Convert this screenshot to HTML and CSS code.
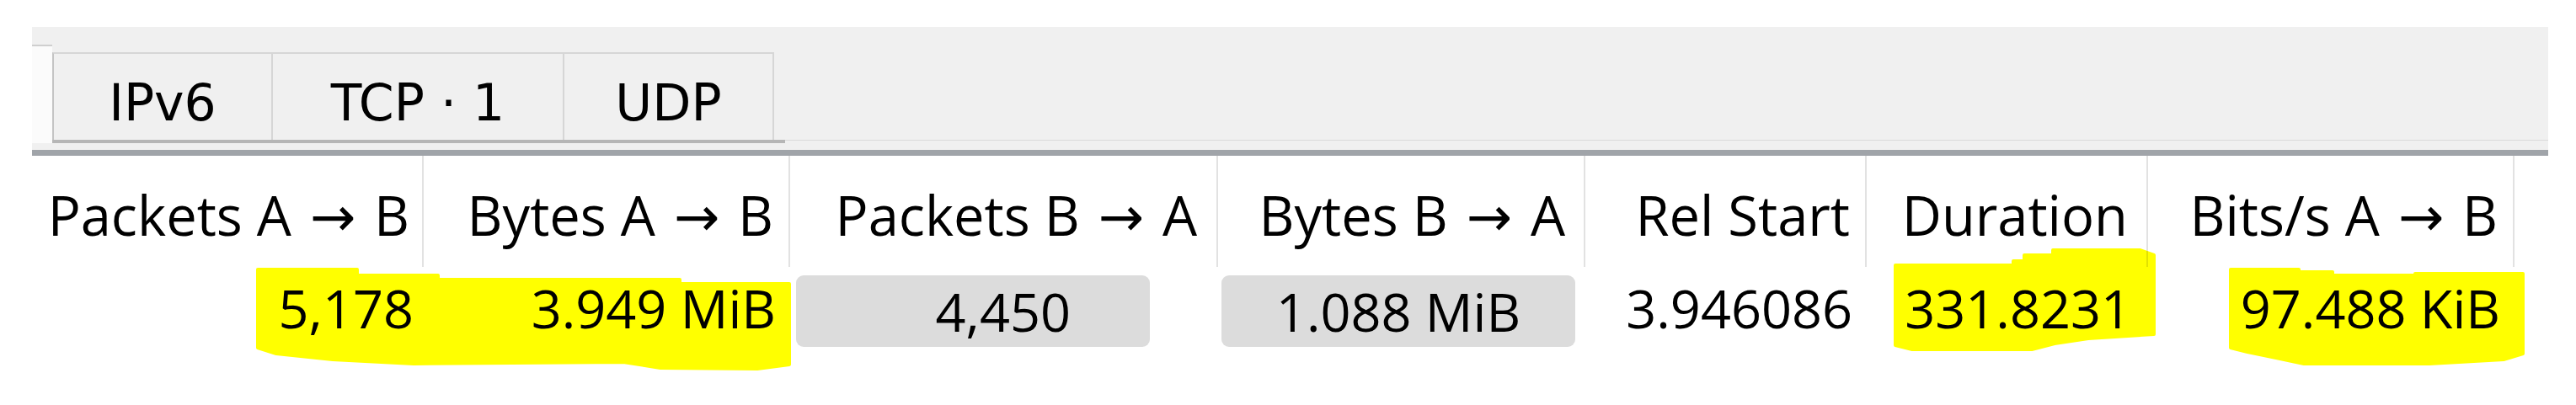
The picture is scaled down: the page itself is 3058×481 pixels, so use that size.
FILE: index.html
```html
<!DOCTYPE html>
<html>
<head>
<meta charset="utf-8">
<link rel="stylesheet" href="styles.css">
</head>
<body>
<div class="page">
  <div class="tabstrip">
    <div class="notch"></div>
    <div class="tabs">
      <div class="tab t1">IPv6</div>
      <div class="tab t2">TCP · 1</div>
      <div class="tab t3">UDP</div>
    </div>
    <div class="fill"></div>
  </div>
  <div class="table">
    <div class="hdr">
      <div class="c c1">Packets A <span class="arr">→</span> B</div>
      <div class="c c2">Bytes A <span class="arr">→</span> B</div>
      <div class="c c3">Packets B <span class="arr">→</span> A</div>
      <div class="c c4">Bytes B <span class="arr">→</span> A</div>
      <div class="c c5">Rel Start</div>
      <div class="c c6">Duration</div>
      <div class="c c7">Bits/s A <span class="arr">→</span> B</div>
    </div>
    <div class="vals">
      <div class="v v1">5,178</div>
      <div class="v v2">3.949 MiB</div>
      <div class="v v3"><div class="pill p3">4,450</div></div>
      <div class="v v4"><div class="pill p4">1.088 MiB</div></div>
      <div class="v v5">3.946086</div>
      <div class="v v6">331.8231</div>
      <div class="v v7">97.488 KiB</div>
    </div>
  </div>
  <svg class="marker" width="3058" height="481" viewBox="0 0 3058 481">
    <polygon points="306,320 424,320 424,327 520,327 520,332 807,332 807,337 937,337 937,433 899,438 784,437 740,430 491,432 395,427 328,420 306,413"/>
    <polygon points="2250,315 2390,315 2390,310 2403,310 2403,303 2437,303 2437,297 2540,297 2557,303 2557,397 2479,402 2439,408 2412,415 2270,415 2250,410"/>
    <polygon points="2648,320 2729,320 2729,323 2769,323 2769,327 2867,327 2867,325 2995,325 2995,420 2972,427 2884,432 2735,432 2702,425 2668,418 2648,413"/>
  </svg>
</div>
</body>
</html>
```
FILE: styles.css
```css
html, body {
  margin: 0;
  padding: 0;
  background: #ffffff;
}
.page {
  position: relative;
  width: 3058px;
  height: 481px;
  overflow: hidden;
  font-family: "Open Sans", "DejaVu Sans", sans-serif;
  color: #000;
}
.tabstrip {
  box-sizing: border-box;
  margin-left: 38px;
  margin-top: 32px;
  width: 2987px;
  height: 146px;
  background: #f0f0f0;
  display: flex;
  align-items: flex-end;
  padding-bottom: 8px;
}
.notch {
  box-sizing: border-box;
  width: 24px;
  height: 117px;
  background: #fbfbfb;
  border-top: 2px solid #cfcfcf;
}
.tabs {
  display: flex;
  border-bottom: 4px solid #b6b6b6;
  padding-right: 13px;
}
.tab {
  box-sizing: border-box;
  height: 104px;
  border-top: 2px solid #d6d6d6;
  border-left: 2px solid #d6d6d6;
  background: #f0f0f0;
  text-align: center;
  font-family: "DejaVu Sans", sans-serif;
  font-size: 60px;
  line-height: 70px;
  padding-top: 23px;
  color: #000;
}
.t1 { width: 260px; border-left-color: #c4c4c4; }
.t2 { width: 346px; }
.t3 { width: 251px; border-right: 2px solid #d6d6d6; }
.fill {
  flex: 1;
  height: 0;
  border-bottom: 1px solid #dadada;
  margin-bottom: 3px;
}
.table {
  margin-left: 38px;
  width: 2987px;
  border-top: 7px solid #a0a4a9;
}
.hdr, .vals {
  display: grid;
  grid-template-columns: 465px 435px 508px 436px 334px 334px 435px;
}
.hdr {
  height: 132px;
}
.c {
  box-sizing: border-box;
  text-align: right;
  font-size: 65px;
  font-weight: 500;
  line-height: 86px;
  padding-top: 27px;
  border-right: 2px solid #e2e2e2;
  white-space: nowrap;
}
.arr {
  display: inline-block;
  margin: 0 5px;
}
.c1 { padding-right: 15px; }
.c2 { padding-right: 18px; }
.c3 { padding-right: 23px; }
.c4 { padding-right: 22px; }
.c5 { padding-right: 18px; }
.c6 { padding-right: 22px; }
.c7 { padding-right: 18px; }
.vals {
  height: 130px;
}
.v {
  box-sizing: border-box;
  text-align: right;
  font-size: 63px;
  font-weight: 500;
  line-height: 86px;
  padding-top: 6px;
  white-space: nowrap;
}
.v1 { padding-right: 12px; }
.v2 { padding-right: 17px; }
.v5 { padding-right: 17px; }
.v6 { padding-right: 20px; }
.v7 { padding-right: 17px; }
.v3, .v4 { padding-top: 10px; }
.pill {
  box-sizing: border-box;
  width: 420px;
  height: 85px;
  line-height: 85px;
  background: #dcdcdc;
  border-radius: 9px;
}
.p3 { margin-left: 7px; text-align: right; padding-right: 94px; }
.p4 { margin-left: 4px; text-align: center; }
.marker {
  position: absolute;
  left: 0;
  top: 0;
  mix-blend-mode: multiply;
  pointer-events: none;
}
.marker polygon {
  fill: #ffff00;
  stroke: #ffff00;
  stroke-width: 4;
  stroke-linejoin: round;
}
```
